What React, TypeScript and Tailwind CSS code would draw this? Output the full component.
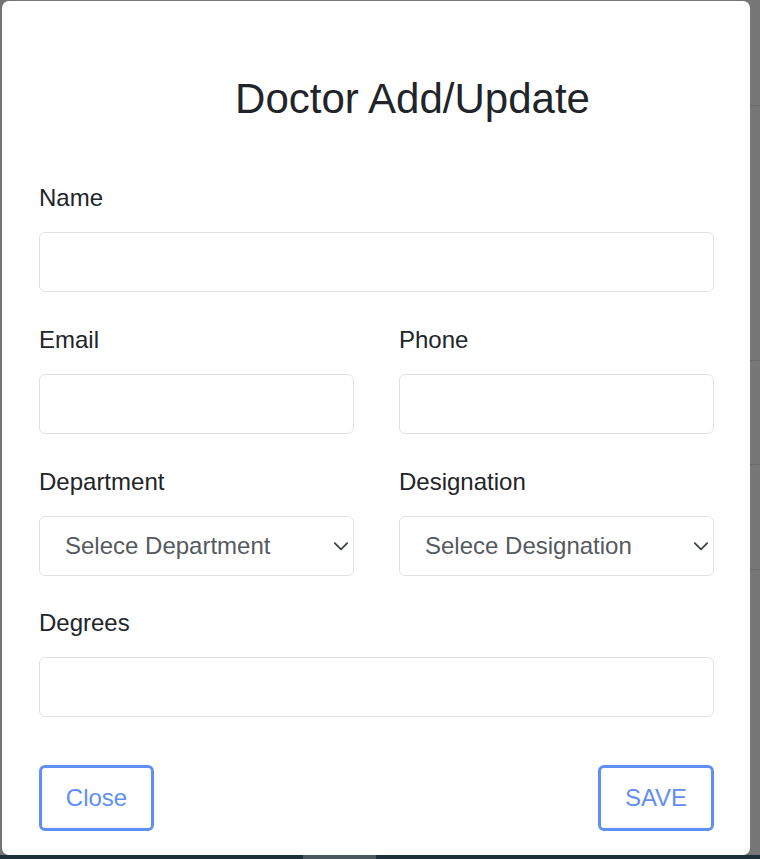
import React from 'react'

function Field({ label, children, className = '' }: { label: string; children: React.ReactNode; className?: string }) {
  return (
    <div className={`flex flex-col ${className}`}>
      <label className="text-[24px] leading-[28px] text-[#212529] mb-[20px]">{label}</label>
      {children}
    </div>
  )
}

function TextInput() {
  return (
    <input
      type="text"
      className="h-[60px] w-full rounded-[6px] border border-[#dfe2e6] bg-white px-[26px] text-[24px] outline-none"
    />
  )
}

function Select({ placeholder }: { placeholder: string }) {
  return (
    <div className="relative">
      <select className="h-[60px] w-full appearance-none rounded-[6px] border border-[#dfe2e6] bg-white pl-[25px] text-[24px] text-[#555a60] outline-none">
        <option>{placeholder}</option>
      </select>
      <svg
        className="pointer-events-none absolute right-[4px] top-[21px]"
        width="18"
        height="18"
        viewBox="0 0 16 16"
        fill="none"
        stroke="#3c4248"
        strokeWidth="1.6"
        strokeLinecap="round"
        strokeLinejoin="round"
      >
        <path d="m2.5 5.5 5.5 5.5 5.5-5.5" />
      </svg>
    </div>
  )
}

export default function App() {
  return (
    <div
      className="flex h-[859px] w-[760px] flex-col overflow-hidden bg-[#777777]"
      style={{ fontFamily: '"Liberation Sans", Arial, sans-serif' }}
    >
      <div className="flex flex-1">
        <div className="w-[2px] bg-[#747474]" />
        <div className="mt-[1px] flex h-[854px] w-[748px] flex-col rounded-[7px] bg-white pl-[37px] pr-[36px] pt-[74px]">
          <h2 className="pl-[72px] text-center text-[42px] leading-[48px] text-[#212529]">
            Doctor Add/Update
          </h2>

          <div className="mt-[61px] flex flex-col gap-[34px]">
            <Field label="Name">
              <TextInput />
            </Field>

            <div className="grid grid-cols-2 gap-x-[45px]">
              <Field label="Email">
                <TextInput />
              </Field>
              <Field label="Phone">
                <TextInput />
              </Field>
            </div>

            <div className="grid grid-cols-2 gap-x-[45px]">
              <Field label="Department">
                <Select placeholder="Selece Department" />
              </Field>
              <Field label="Designation">
                <Select placeholder="Selece Designation" />
              </Field>
            </div>

            <Field label="Degrees" className="-mt-px">
              <TextInput />
            </Field>
          </div>

          <div className="mt-[48px] flex justify-between">
            <button className="h-[66px] w-[115px] rounded-[6px] border-[3px] border-[#5f8ff5] text-[24px] text-[#5f8ff5]">
              Close
            </button>
            <button className="h-[66px] w-[116px] rounded-[6px] border-[3px] border-[#5f8ff5] text-[24px] text-[#5f8ff5]">
              SAVE
            </button>
          </div>
        </div>
        <div className="flex w-[10px] flex-col">
          <div className="h-[105px]" />
          <div className="h-px bg-[#6b6b6b]" />
          <div className="h-[254px]" />
          <div className="h-px bg-[#6b6b6b]" />
          <div className="h-[103px]" />
          <div className="h-px bg-[#6b6b6b]" />
          <div className="h-[104px]" />
          <div className="h-px bg-[#6b6b6b]" />
        </div>
      </div>
      <div className="flex h-[4px] bg-[#1e3039]">
        <div className="w-[303px]" />
        <div className="w-[73px] bg-[#4b5a60]" />
      </div>
    </div>
  )
}
